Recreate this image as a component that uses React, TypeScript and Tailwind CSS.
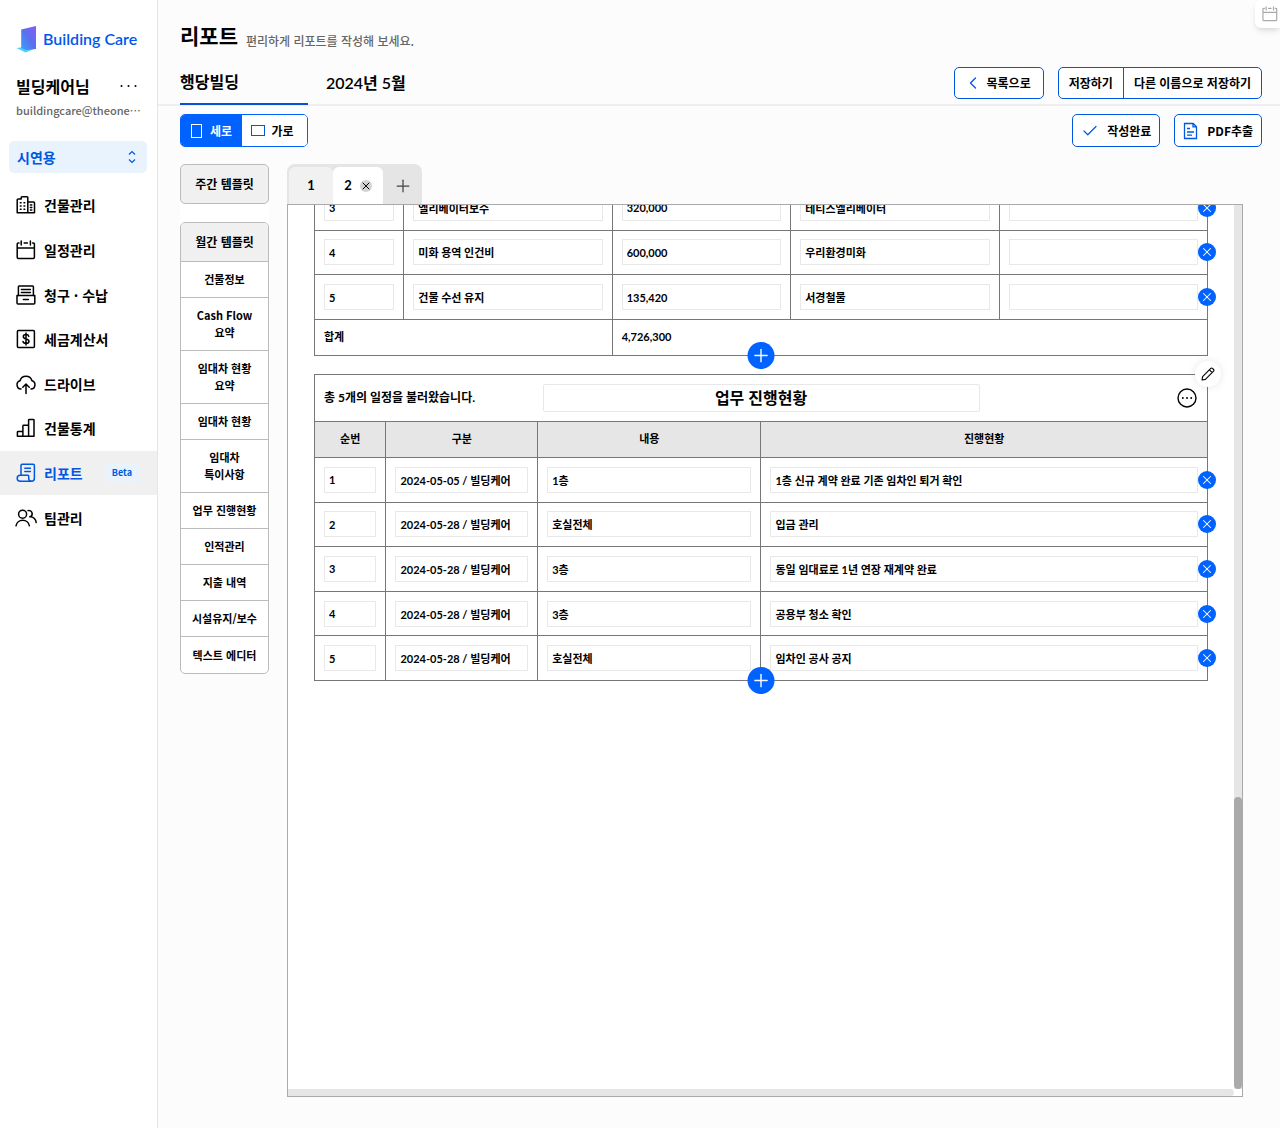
import type { ReactNode } from "react";
import { Check, ChevronLeft, Plus, X } from "lucide-react";

const navItems = [
  { label: "건물관리", icon: "building" },
  { label: "일정관리", icon: "calendar" },
  { label: "청구 · 수납", icon: "billing" },
  { label: "세금계산서", icon: "tax" },
  { label: "드라이브", icon: "drive" },
  { label: "건물통계", icon: "stats" },
  { label: "리포트", icon: "report", active: true },
  { label: "팀관리", icon: "team" },
];

const templates = [
  ["건물정보"],
  ["Cash Flow", "요약"],
  ["임대차 현황", "요약"],
  ["임대차 현황"],
  ["임대차", "특이사항"],
  ["업무 진행현황"],
  ["인적관리"],
  ["지출 내역"],
  ["시설유지/보수"],
  ["텍스트 에디터"],
];

const expenses = [
  ["3", "엘리베이터보수", "320,000", "테티스엘리베이터", ""],
  ["4", "미화 용역 인건비", "600,000", "우리환경미화", ""],
  ["5", "건물 수선 유지", "135,420", "서경철물", ""],
];

const taskColumns = ["순번", "구분", "내용", "진행현황"];

const tasks = [
  ["1", "2024-05-05 / 빌딩케어", "1층", "1층 신규 계약 완료 기존 임차인 퇴거 확인"],
  ["2", "2024-05-28 / 빌딩케어", "호실전체", "입금 관리"],
  ["3", "2024-05-28 / 빌딩케어", "3층", "동일 임대료로 1년 연장 재계약 완료"],
  ["4", "2024-05-28 / 빌딩케어", "3층", "공용부 청소 확인"],
  ["5", "2024-05-28 / 빌딩케어", "호실전체", "임차인 공사 공지"],
];

const iconShapes: Record<string, ReactNode> = {
  building: (
    <>
      <path d="M1.2 17.8V5a1 1 0 0 1 1-1h3V2.6a.8.8 0 0 1 .8-.8h5a.8.8 0 0 1 .8.8v15.2M11.8 7h5.7a1 1 0 0 1 1 1v9.8H1.2" />
      <path d="M4.3 7.8h.8M8 7.8h.8M4.3 11h.8M8 11h.8M4.3 14.2h.8M8 14.2h.8M14.4 10h1.4M14.4 12.5h1.4M14.4 15h1.4" />
    </>
  ),
  calendar: (
    <>
      <path d="M3 3H2.2a1 1 0 0 0-1 1v13.2a1.2 1.2 0 0 0 1.2 1.2h14.8a1.2 1.2 0 0 0 1.2-1.2V4a1 1 0 0 0-1-1h-.8M8.2 3h3.2M1.2 8h17.2" />
      <path d="M5.2 1v4M14.4 1v4" />
    </>
  ),
  billing: (
    <>
      <path d="M2.4 10.4V1.8a.8.8 0 0 1 .8-.8h13.4a.8.8 0 0 1 .8.8v8.6" />
      <path d="M1 10.4h17.8V18a1 1 0 0 1-1 1H2a1 1 0 0 1-1-1zM5.4 4.4h9M5.4 7.6h9M7.4 14.4h5" />
    </>
  ),
  tax: (
    <>
      <rect x="1.4" y="1.4" width="17" height="17" rx="1" />
      <path d="M12.8 7.4c-.3-1.2-1.4-1.8-2.8-1.8-1.6 0-2.7.8-2.7 2.1 0 2.9 5.7 1.5 5.7 4.5 0 1.4-1.2 2.2-3 2.2-1.6 0-2.8-.7-3-2M10 4v12" />
    </>
  ),
  drive: (
    <>
      <path d="M5 15a4.2 4.2 0 0 1-1-8.2 6.2 6.2 0 0 1 12 0A4.2 4.2 0 0 1 15 15" />
      <path d="M10 19.4v-9M6.8 13.2l3.2-3.2 3.2 3.2" />
    </>
  ),
  stats: (
    <path d="M1.4 18.2v-4a.7.7 0 0 1 .7-.7h4.8V8a.7.7 0 0 1 .7-.7h5V2.1a.7.7 0 0 1 .7-.7h4a.7.7 0 0 1 .7.7v16.1zM6.9 13.5v4.7M12.6 7.3v10.9" />
  ),
  report: (
    <>
      <path d="M5 12V2.4a1.2 1.2 0 0 1 1.2-1.2h11a1.2 1.2 0 0 1 1.2 1.2v12.9a3 3 0 0 1-3 3H4.5" />
      <path d="M15.3 18.2a2.6 2.6 0 0 1-2.6-2.6V13a.8.8 0 0 0-.8-.8H4.2a3 3 0 0 0 0 6M8.8 5.2h5.6M8.8 8.6h5.6" />
    </>
  ),
  team: (
    <>
      <circle cx="6.6" cy="6.2" r="4" />
      <path d="M0 17.8a6.8 6.8 0 0 1 13.4 0M12 2.6a3.2 3.2 0 1 1 1.8 6.2M14.2 8.8a6 6 0 0 1 6 5.8" />
    </>
  ),
};

function LineIcon({ name, className = "size-5" }: { name: string; className?: string }) {
  return (
    <svg
      viewBox="0 0 20 20"
      className={`${className} shrink-0 overflow-visible`}
      fill="none"
      stroke="currentColor"
      strokeWidth="1.5"
      strokeLinecap="round"
      strokeLinejoin="round"
      aria-hidden="true"
    >
      {iconShapes[name]}
    </svg>
  );
}

function Sidebar() {
  return (
    <aside className="w-[158px] shrink-0 border-r border-[#e5e5e5] bg-white">
      <a href="#home" className="mt-[25px] ml-4 flex h-7 items-center gap-[5px]">
        <svg viewBox="0 0 22 28" className="h-7 w-[22px]" aria-hidden="true">
          <defs>
            <linearGradient id="door" x1="1" y1="0" x2="0" y2="1">
              <stop offset="0" stopColor="#8a5cf5" />
              <stop offset="0.5" stopColor="#5a6ff0" />
              <stop offset="1" stopColor="#35a4f8" />
            </linearGradient>
          </defs>
          <path d="M.5 23l8-1 12 1-11 4.5z" fill="#4fd0fa" />
          <path d="M5.2 4.5L20 1v23L10 25l-4.8-2z" fill="url(#door)" />
        </svg>
        <span className="font-[Lato] text-base font-semibold whitespace-nowrap text-[#0057f0]">Building Care</span>
      </a>

      <div className="mt-[21px] flex h-6 items-center justify-between pr-[18px] pl-4">
        <strong className="text-base font-bold">빌딩케어님</strong>
        <button type="button" aria-label="계정 메뉴">
          <svg viewBox="0 0 20 4" className="h-1 w-5" aria-hidden="true">
            <circle cx="2.5" cy="2" r="1" />
            <circle cx="9.5" cy="2" r="1" />
            <circle cx="16.5" cy="2" r="1" />
          </svg>
        </button>
      </div>
      <p className="mt-1 ml-4 text-[11px] leading-4 font-medium whitespace-nowrap text-[#666]">buildingcare@theone⋯</p>

      <div className="relative mt-[23px] mr-2.5 ml-[9px]">
        <select
          aria-label="워크스페이스"
          className="h-8 w-full appearance-none rounded-[5px] bg-[#e8f3fd] pb-px pl-2 text-sm font-bold text-[#0057e0]"
        >
          <option>시연용</option>
        </select>
        <svg
          viewBox="0 0 8 14"
          className="pointer-events-none absolute top-[9px] right-[11px] h-3.5 w-2"
          fill="none"
          stroke="#0057e0"
          strokeWidth="1.2"
          aria-hidden="true"
        >
          <path d="M1 4.5L4 1.5l3 3M1 9.5l3 3 3-3" />
        </svg>
      </div>

      <nav className="mt-2.5 grid h-[357px] grid-rows-8">
        {navItems.map((item) => (
          <a
            key={item.label}
            href={`#${item.icon}`}
            className={`flex items-center gap-2 pl-4 text-sm font-bold ${
              item.active ? "bg-[#f0f0f0] text-[#0057e0]" : "text-black"
            }`}
          >
            <LineIcon name={item.icon} />
            <span className="whitespace-nowrap">{item.label}</span>
            {item.active && (
              <span className="ml-auto mr-[18px] rounded bg-[#e8f3fd] px-[7px] text-[9px] leading-[18px]">Beta</span>
            )}
          </a>
        ))}
      </nav>
    </aside>
  );
}

const outlineButton =
  "flex items-center rounded-[5px] border border-[#0057e0] bg-white text-xs font-bold whitespace-nowrap";

function PageHeader() {
  return (
    <header className="border-b-2 border-[#efefef] pr-[18px] pl-[22px]">
      <div className="flex items-end gap-2 pt-[19px]">
        <h1 className="text-[21px] leading-8 font-bold">리포트</h1>
        <p className="text-xs leading-5 font-medium text-[#666]">편리하게 리포트를 작성해 보세요.</p>
      </div>
      <div className="-mb-px flex h-[54px] items-end">
        <h2 className="h-10 w-32 border-b-2 border-[#0a4fd8] text-base leading-8 font-bold">행당빌딩</h2>
        <p className="ml-[18px] h-10 font-[Lato,'Noto_Sans_CJK_KR',sans-serif] text-base leading-9 font-semibold">2024년 5월</p>
        <div className="mb-1.5 ml-auto flex gap-3.5">
          <button type="button" className={`${outlineButton} h-8 gap-1 pr-3 pl-2`}>
            <ChevronLeft className="size-5 text-[#0057e0]" strokeWidth={1.6} />
            목록으로
          </button>
          <div className={`${outlineButton} h-8 divide-x divide-[#0057e0]`}>
            <button type="button" className="h-full px-2.5">저장하기</button>
            <button type="button" className="h-full px-2.5">다른 이름으로 저장하기</button>
          </div>
        </div>
      </div>
    </header>
  );
}

function Toolbar() {
  return (
    <div className="flex h-[33px] justify-between">
      <div className="flex w-32 overflow-hidden rounded-[5px] border border-[#0062ff] text-xs font-bold">
        <button type="button" className="flex flex-1 items-center justify-center gap-2 bg-[#0062ff] text-white">
          <span className="h-3.5 w-[11px] border border-white" />
          세로
        </button>
        <button type="button" className="flex flex-1 items-center justify-center gap-1.5 bg-white pr-1">
          <span className="h-[11px] w-3.5 border border-[#0057e0]" />
          가로
        </button>
      </div>
      <div className="flex gap-3.5">
        <button type="button" className={`${outlineButton} gap-2 px-2`}>
          <Check className="size-[18px] text-[#0057e0]" strokeWidth={1.6} />
          작성완료
        </button>
        <button type="button" className={`${outlineButton} gap-2 px-2`}>
          <svg viewBox="0 0 16 18" className="h-[18px] w-4" fill="none" stroke="#0057e0" strokeWidth="1.3" aria-hidden="true">
            <path d="M1.5 1.5h8.7l3.3 3.2v11.8h-12zM10 1.5v3.4h3.5M4 6.5h3M4 10h7M4 13.2h5" />
          </svg>
          PDF추출
        </button>
      </div>
    </div>
  );
}

function TemplateList() {
  return (
    <div className="w-[89px] shrink-0 self-start bg-white text-center">
      <button type="button" className="block h-10 w-full rounded-[5px] border border-[#bbb] bg-[#f0f0f0] text-xs font-bold">
        주간 템플릿
      </button>
      <div className="mt-[18px] divide-y divide-[#bbb] overflow-hidden rounded-[5px] border border-[#bbb]">
        <button type="button" className="block h-[39px] w-full bg-[#f0f0f0] text-xs font-bold">
          월간 템플릿
        </button>
        {templates.map((lines) => (
          <button
            key={lines.join(" ")}
            type="button"
            className={`block w-full text-[11px] leading-[17px] font-bold ${lines.length > 1 ? "h-[53px]" : "h-9"}`}
          >
            {lines.map((line) => (
              <span key={line} className="block">{line}</span>
            ))}
          </button>
        ))}
      </div>
    </div>
  );
}

function PageTabs() {
  return (
    <div className="flex h-10 w-[135px] items-stretch rounded-t-lg bg-[#e5e5e5] pt-[3px] pl-0.5 font-[Lato] text-[13px] font-bold">
      <button type="button" className="w-11 rounded-t-md bg-[#f1f1f1]">1</button>
      <div className="flex w-[50px] items-center justify-center gap-2 rounded-t-md bg-white">
        <button type="button">2</button>
        <button type="button" aria-label="탭 닫기" className="flex size-3 items-center justify-center rounded-full bg-[#d4d4d4]">
          <X className="size-3" strokeWidth={2} />
        </button>
      </div>
      <button type="button" aria-label="탭 추가" className="flex flex-1 items-center justify-center">
        <Plus className="size-5 text-[#444]" strokeWidth={1.5} />
      </button>
    </div>
  );
}

function CellInput({ value, label }: { value: string; label: string }) {
  return (
    <input
      type="text"
      defaultValue={value}
      aria-label={label}
      className="block h-[26px] w-full border border-[#e8e8e8] bg-white px-1 text-[11px] font-bold"
    />
  );
}

function RemoveRow() {
  return (
    <button
      type="button"
      aria-label="행 삭제"
      className="absolute top-1/2 -right-[9px] z-10 flex size-[18px] -translate-y-1/2 items-center justify-center rounded-full bg-[#0062ff] text-white"
    >
      <X className="size-3.5" strokeWidth={1.8} />
    </button>
  );
}

function AddRow() {
  return (
    <button
      type="button"
      aria-label="행 추가"
      className="absolute -bottom-[13px] left-1/2 z-10 flex size-[27px] -translate-x-1/2 items-center justify-center rounded-full bg-[#0062ff] text-white"
    >
      <Plus className="size-[21px]" strokeWidth={1.6} />
    </button>
  );
}

function EditableRow({ cells }: { cells: string[] }) {
  return (
    <tr>
      {cells.map((cell, i) => (
        <td key={i} className="relative border border-[#777] px-[9px] py-2">
          <CellInput value={cell} label={`${cells[0]}행 ${i + 1}열`} />
          {i === cells.length - 1 && <RemoveRow />}
        </td>
      ))}
    </tr>
  );
}

function ExpenseTable() {
  return (
    <section className="relative">
      <table className="h-[171px] w-full table-fixed border-collapse">
        <colgroup>
          <col className="w-[10%]" />
          <col className="w-[23.33%]" />
          <col className="w-[20%]" />
          <col className="w-[23.33%]" />
          <col />
        </colgroup>
        <tbody>
          {expenses.map((row) => (
            <EditableRow key={row[0]} cells={row} />
          ))}
          <tr className="h-9">
            <th colSpan={2} className="border border-[#777] px-[9px] text-left font-bold">합계</th>
            <td colSpan={3} className="border border-[#777] px-[9px] font-bold">4,726,300</td>
          </tr>
        </tbody>
      </table>
      <AddRow />
    </section>
  );
}

function TaskTable() {
  return (
    <section className="relative mt-[18px]">
      <div className="flex h-[47px] items-center border-x border-t border-[#777] px-[9px]">
        <p className="flex-1 text-xs font-bold">총 5개의 일정을 불러왔습니다.</p>
        <input
          type="text"
          defaultValue="업무 진행현황"
          aria-label="표 제목"
          className="h-7 w-1/2 rounded-xs border border-[#e8e8e8] bg-white pb-0.5 text-center text-base font-bold"
        />
        <div className="flex flex-1 justify-end">
          <button type="button" aria-label="더보기">
            <svg viewBox="0 0 22 22" className="size-[22px]" fill="none" stroke="black" strokeWidth="1.4" aria-hidden="true">
              <circle cx="11" cy="11" r="9" />
              <path d="M6.8 11h.1M11 11h.1M15.2 11h.1" strokeWidth="1.8" strokeLinecap="round" />
            </svg>
          </button>
        </div>
      </div>
      <table className="h-[260px] w-full table-fixed border-collapse">
        <colgroup>
          <col className="w-[8%]" />
          <col className="w-[17%]" />
          <col className="w-[25%]" />
          <col />
        </colgroup>
        <thead>
          <tr className="h-9">
            {taskColumns.map((name) => (
              <th key={name} className="border border-[#777] bg-[#e6e6e6] font-bold">{name}</th>
            ))}
          </tr>
        </thead>
        <tbody>
          {tasks.map((row) => (
            <EditableRow key={row[0]} cells={row} />
          ))}
        </tbody>
      </table>
      <AddRow />
      <button
        type="button"
        aria-label="편집"
        className="absolute -top-[13px] -right-[13px] z-10 flex size-[26px] items-center justify-center rounded-full bg-white shadow-[0_0_8px_rgba(0,0,0,0.1)]"
      >
        <svg viewBox="0 0 14 14" className="size-3.5" fill="none" stroke="black" strokeWidth="1.1" strokeLinejoin="round" aria-hidden="true">
          <path d="M1 13l.6-3.4L9.8 1.4a1.2 1.2 0 0 1 1.7 0l1.1 1.1a1.2 1.2 0 0 1 0 1.7l-8.2 8.2zM8.4 2.8l2.8 2.8" />
        </svg>
      </button>
    </section>
  );
}

function ReportCanvas() {
  return (
    <div className="flex min-h-0 flex-1 flex-col border border-[#aaa] bg-white">
      <div className="flex min-h-0 flex-1">
        <div className="flex-1 overflow-hidden px-[26px] font-[Lato,'Noto_Sans_CJK_KR',sans-serif] text-[11px]">
          <div className="-mt-5">
            <ExpenseTable />
            <TaskTable />
          </div>
        </div>
        <div className="flex w-2 flex-col justify-end bg-[#e6e6e6]">
          <div className="h-[33%] rounded-full bg-[#aaa]" />
        </div>
      </div>
      <div className="mr-2 h-[7px] rounded-r-full bg-[#e6e6e6]" />
    </div>
  );
}

export default function App() {
  return (
    <div lang="ko" className="relative flex min-h-screen bg-[#fcfcfc] font-['Noto_Sans_CJK_KR',sans-serif] text-black">
      <Sidebar />
      <main className="flex min-w-0 flex-1 flex-col">
        <PageHeader />
        <div className="flex flex-1 flex-col pt-2 pr-[18px] pb-[31px] pl-[22px]">
          <Toolbar />
          <div className="mt-[17px] flex flex-1 gap-[18px] pr-[19px]">
            <TemplateList />
            <div className="flex min-w-0 flex-1 flex-col">
              <PageTabs />
              <ReportCanvas />
            </div>
          </div>
        </div>
      </main>
      <button
        type="button"
        aria-label="캘린더 열기"
        className="absolute top-0 right-0 flex h-7 w-[25px] items-center justify-end rounded-l-md bg-white pr-0.5 text-[#aaa] shadow-md"
      >
        <LineIcon name="calendar" className="size-4" />
      </button>
    </div>
  );
}
